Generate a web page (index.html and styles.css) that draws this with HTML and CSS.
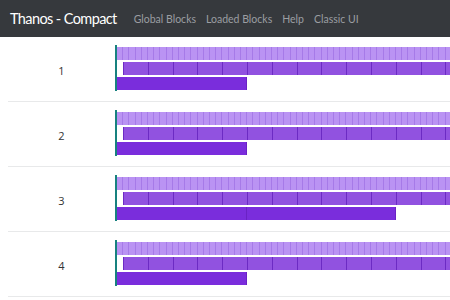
FILE: index.html
```html
<!DOCTYPE html>
<html>
<head>
<meta charset="utf-8">
<link rel="stylesheet" href="styles.css">
</head>
<body>
<nav class="navbar">
  <span class="brand">Thanos - Compact</span>
  <a class="link">Global Blocks</a>
  <a class="link">Loaded Blocks</a>
  <a class="link">Help</a>
  <a class="link">Classic UI</a>
</nav>
<main class="list">
  <div class="row">
    <div class="num">1</div>
    <div class="bars">
      <div class="bar raw"></div>
      <div class="bar mid"></div>
      <div class="bar low"><span class="seg" style="width:130px"></span></div>
    </div>
  </div>
  <div class="row">
    <div class="num">2</div>
    <div class="bars">
      <div class="bar raw"></div>
      <div class="bar mid"></div>
      <div class="bar low"><span class="seg" style="width:130px"></span></div>
    </div>
  </div>
  <div class="row">
    <div class="num">3</div>
    <div class="bars">
      <div class="bar raw"></div>
      <div class="bar mid"></div>
      <div class="bar low"><span class="seg" style="width:130px"></span><span class="seg" style="width:149px"></span></div>
    </div>
  </div>
  <div class="row">
    <div class="num">4</div>
    <div class="bars">
      <div class="bar raw"></div>
      <div class="bar mid"></div>
      <div class="bar low"><span class="seg" style="width:130px"></span></div>
    </div>
  </div>
</main>
</body>
</html>
```

FILE: styles.css
```css
html, body {
  margin: 0;
  padding: 0;
  background: #fff;
  overflow: hidden;
  font-family: "Lato", "Open Sans", sans-serif;
}
.navbar {
  height: 37px;
  background: #36393d;
  display: flex;
  align-items: center;
  padding-left: 10px;
  box-sizing: border-box;
}
.brand {
  color: #fff;
  font-size: 14.5px;
  letter-spacing: -0.6px;
  margin-right: 17px;
}
.link {
  color: #9b9ea2;
  font-size: 10.5px;
  margin-right: 10px;
}
.list {
  padding-left: 8px;
}
.row {
  display: flex;
  height: 64px;
  border-bottom: 1px solid #e8e9ea;
  box-sizing: content-box;
}
.num {
  width: 107px;
  flex: none;
  display: flex;
  align-items: center;
  justify-content: center;
  font-family: "Open Sans", sans-serif;
  font-size: 11px;
  color: #333;
  padding-top: 3px;
  box-sizing: border-box;
}
.bars {
  margin-top: 8px;
  height: 46px;
  border-left: 2px solid #17827f;
  flex: 1;
  display: flex;
  flex-direction: column;
  gap: 2px;
  padding-top: 2px;
  box-sizing: border-box;
}
.bar {
  height: 13px;
  flex: none;
}
.raw {
  background: repeating-linear-gradient(90deg, #ba93f3 0 5.2px, #a67ae8 5.2px 6.2px);
}
.mid {
  margin-left: 6px;
  background: repeating-linear-gradient(90deg, #6c2bc4 0 1px, #9152e0 1px 24.8px);
}
.low {
  display: flex;
}
.seg {
  height: 13px;
  background: #7a2ddc;
  border-right: 1px solid #6a22c4;
  box-sizing: border-box;
}
```
